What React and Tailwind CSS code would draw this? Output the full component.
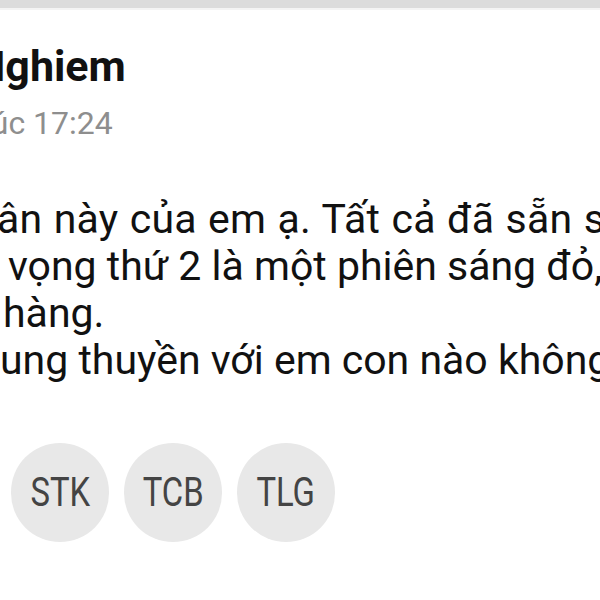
import React from 'react';

const chips = ['STK', 'TCB', 'TLG'];

const lines = [
  { text: 'ân này của em ạ. Tất cả đã sẵn sàng', shift: 'ml-[-3px] tracking-[0.2px] [word-spacing:1px]' },
  { text: 'vọng thứ 2 là một phiên sáng đỏ,', shift: 'ml-[8px]' },
  { text: 'hàng.', shift: 'ml-[3px]' },
  { text: 'ung thuyền với em con nào không ạ', shift: 'ml-[0px]' },
];

export default function App() {
  return (
    <div className="w-[600px] h-[600px] overflow-hidden bg-white font-['Roboto',sans-serif]">
      {/* top divider */}
      <div className="h-[8px] bg-[#dcdcdc]" />
      <div className="h-[2px] bg-[#f4f4f4]" />

      {/* header */}
      <div className="pt-[32px] whitespace-nowrap">
        <div className="ml-[-25px] text-[43px] leading-[48px] font-bold text-[#111]">Nghiem</div>
        <div className="ml-[-17px] mt-[13px] text-[32px] leading-[40px] text-[#8e8e8e]">lúc 17:24</div>
      </div>

      {/* message body */}
      <div className="mt-[53px] whitespace-nowrap text-[41px] leading-[47px] text-[#111]">
        {lines.map((l) => (
          <div key={l.text} className={l.shift}>{l.text}</div>
        ))}
      </div>

      {/* ticker chips */}
      <div className="mt-[59px] pl-[11px] flex gap-[15px]">
        {chips.map((c) => (
          <div
            key={c}
            className="w-[98px] h-[99px] rounded-full bg-[#e8e8e8] flex items-center justify-center text-[40px] text-[#444]"
          >
            <span className="inline-block scale-x-[0.82]">{c}</span>
          </div>
        ))}
      </div>
    </div>
  );
}
